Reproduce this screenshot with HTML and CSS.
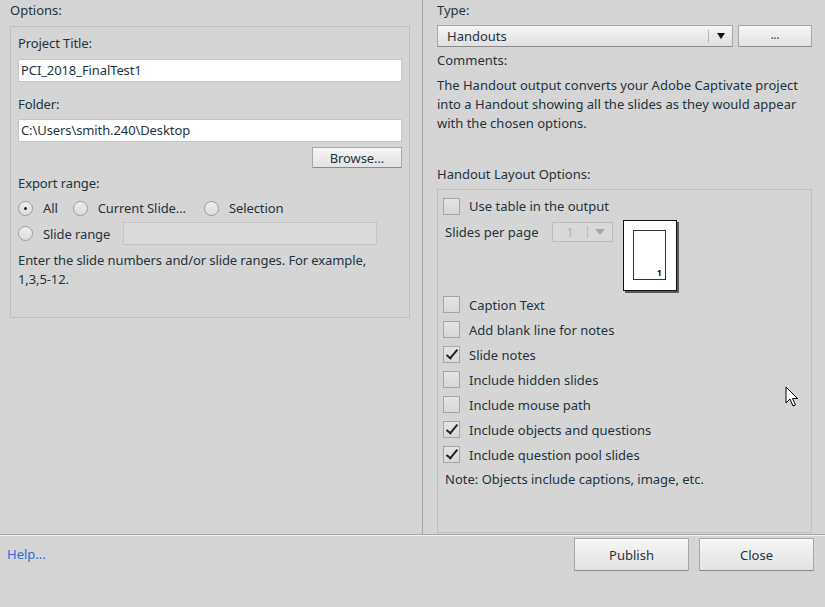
FILE: index.html
```html
<!DOCTYPE html>
<html>
	<head>
		<meta charset="utf-8" />
		<title>Publish</title>
		<link rel="stylesheet" href="styles.css">
	</head>
	<body>
		<div class="dialog">
			<div class="main">
				<!-- left: project options -->
				<div class="col-left">
					<p class="label">Options:</p>
					<div class="group options">
						<p class="label">Project Title:</p>
						<div class="field">PCI_2018_FinalTest1</div>
						<p class="label gap">Folder:</p>
						<div class="field field-2">C:\Users\smith.240\Desktop</div>
						<div class="browse-row"><span class="btn btn-small">Browse...</span></div>
						<p class="label range-label">Export range:</p>
						<div class="radio-row">
							<span class="radio on"></span><span class="rtext">All</span>
							<span class="radio"></span><span class="rtext wide">Current Slide...</span>
							<span class="radio"></span><span class="rtext">Selection</span>
						</div>
						<div class="radio-row range-row">
							<span class="radio"></span><span class="rtext">Slide range</span>
							<span class="field disabled"></span>
						</div>
						<p class="hint">Enter the slide numbers and/or slide ranges. For example,<br>1,3,5-12.</p>
					</div>
				</div>
				<!-- right: output type + handout layout -->
				<div class="col-right">
					<p class="label">Type:</p>
					<div class="type-row">
						<div class="select">
							<span class="select-text">Handouts</span>
							<span class="select-arrow"><i class="tri"></i></span>
						</div>
						<span class="btn btn-dots">...</span>
					</div>
					<p class="label comments">Comments:</p>
					<p class="comment-text">The Handout output converts your Adobe Captivate project<br>into a Handout showing all the slides as they would appear<br>with the chosen options.</p>
					<p class="label layout-label">Handout Layout Options:</p>
					<div class="group layout">
						<div class="check-row"><span class="check"></span>Use table in the output</div>
						<div class="slides-row">
							<span class="spp">Slides per page</span>
							<span class="mini-select"><span class="mini-val">1</span><span class="mini-arrow"><i class="tri grey"></i></span></span>
							<div class="page"><div class="page-inner"><span>1</span></div></div>
						</div>
						<div class="check-row"><span class="check"></span>Caption Text</div>
						<div class="check-row"><span class="check"></span>Add blank line for notes</div>
						<div class="check-row"><span class="check on"></span>Slide notes</div>
						<div class="check-row"><span class="check"></span>Include hidden slides</div>
						<div class="check-row"><span class="check"></span>Include mouse path</div>
						<div class="check-row"><span class="check on"></span>Include objects and questions</div>
						<div class="check-row"><span class="check on"></span>Include question pool slides</div>
						<p class="note">Note: Objects include captions, image, etc.</p>
					</div>
				</div>
			</div>
			<div class="footer">
				<a class="help">Help...</a>
				<div class="actions">
					<span class="btn btn-big">Publish</span>
					<span class="btn btn-big">Close</span>
				</div>
			</div>
			<svg class="cursor" width="14" height="22" viewBox="0 0 14 22">
				<path d="M1 1 L1 17 L5 13 L8 20 L10.5 19 L7.5 12.5 L12.5 12.5 Z" fill="#fff" stroke="#000" stroke-width="1" stroke-linejoin="miter"/>
			</svg>
		</div>
	</body>
</html>
```

FILE: styles.css
```css
*{
	margin: 0;
	padding: 0;
	box-sizing: border-box;
}
body{
	background: #d5d5d5;
	font-family: "Noto Sans", "Liberation Sans", sans-serif;
	font-size: 13px;
	color: #1f343d;
}
.dialog{
	position: relative;
	width: 825px;
	height: 607px;
	overflow: hidden;
}
.main{
	display: flex;
	height: 535px;
	border-bottom: 1px solid #a9a9a9;
}
.label{
	height: 20px;
	line-height: 20px;
}
/* left column */
.col-left{
	width: 424px;
	padding: 0 0 0 10px;
	border-right: 1px solid #a6a6a6;
}
.group{
	border: 1px solid #c0c0c0;
}
.options{
	width: 400px;
	height: 292px;
	margin-top: 6px;
	padding: 6px 7px 0;
	letter-spacing: -0.1px;
}
.field{
	display: block;
	height: 23px;
	line-height: 21px;
	padding-left: 2px;
	background: #fff;
	border: 1px solid #c6c6c6;
	margin-top: 6px;
}
.gap{
	margin-top: 12px;
}
.field-2{
	margin-top: 5px;
}
.browse-row{
	display: flex;
	justify-content: flex-end;
	margin-top: 5px;
}
.btn{
	display: inline-flex;
	align-items: center;
	justify-content: center;
	background: linear-gradient(#f6f6f6, #e2e2e2);
	border: 1px solid #a8a8a8;
	border-bottom-color: #8c8c8c;
	border-radius: 1px;
	cursor: default;
}
.btn-small{
	width: 90px;
	height: 21px;
}
.range-label{
	margin-top: 5px;
}
.radio-row{
	display: flex;
	align-items: center;
	height: 20px;
	margin-top: 5px;
}
.radio{
	position: relative;
	width: 15px;
	height: 15px;
	border-radius: 50%;
	border: 1px solid #9c9c9c;
	background: linear-gradient(#eeeeee, #dcdcdc);
	margin-right: 10px;
}
.radio.on::after{
	content: '';
	position: absolute;
	left: 5px;
	top: 5px;
	width: 3px;
	height: 3px;
	border-radius: 50%;
	background: #222;
}
.rtext{
	margin-right: 15px;
}
.rtext.wide{
	margin-right: 18px;
}
.range-row{
	height: 23px;
	margin-top: 4px;
}
.range-row .rtext{
	margin-right: 13px;
}
.field.disabled{
	width: 254px;
	margin-top: 0;
	background: #dadada;
	border-color: #c4c4c4;
}
.hint{
	line-height: 19px;
	margin-top: 6px;
}
/* right column */
.col-right{
	flex: 1;
	padding: 0 13px 0 14px;
}
.type-row{
	display: flex;
	margin-top: 5px;
	height: 22px;
}
.select{
	display: flex;
	width: 296px;
	background: linear-gradient(#f4f4f4, #e0e0e0);
	border: 1px solid #a8a8a8;
	border-bottom-color: #8c8c8c;
}
.select-text{
	flex: 1;
	padding-left: 9px;
	line-height: 20px;
}
.select-arrow{
	width: 24px;
	display: flex;
	align-items: center;
	justify-content: center;
	margin: 4px 0;
	border-left: 1px solid #b4b4b4;
}
.tri{
	width: 0;
	height: 0;
	border-left: 4px solid transparent;
	border-right: 4px solid transparent;
	border-top: 6px solid #111;
}
.tri.grey{
	border-left-width: 5px;
	border-right-width: 5px;
	border-top: 6px solid #a8a8a8;
}
.btn-dots{
	width: 74px;
	margin-left: 5px;
	font-weight: bold;
	font-size: 10px;
	color: #555;
	padding-bottom: 2px;
}
.comments{
	margin-top: 3px;
}
.comment-text{
	line-height: 19px;
	margin-top: 6px;
}
.layout-label{
	margin-top: 31px;
}
.layout{
	height: 344px;
	margin-top: 5px;
	padding: 7px 5px 0;
}
.check-row{
	display: flex;
	align-items: center;
	height: 25px;
}
.layout > .check-row:first-child{
	height: 18px;
}
.check{
	position: relative;
	width: 17px;
	height: 17px;
	border: 1px solid #a6a6a6;
	background: linear-gradient(#e4e4e4, #d8d8d8);
	margin-right: 9px;
}
.check.on::after{
	content: '';
	position: absolute;
	left: 5px;
	top: 0px;
	width: 4px;
	height: 10px;
	border-right: 2px solid #222;
	border-bottom: 2px solid #222;
	transform: rotate(40deg);
}
.slides-row{
	display: flex;
	align-items: flex-start;
	height: 75px;
	padding-left: 2px;
	margin-top: 2px;
}
.spp{
	line-height: 20px;
	width: 107px;
	margin-top: 5px;
}
.mini-select{
	display: flex;
	width: 61px;
	height: 20px;
	margin-top: 5px;
	border: 1px solid #bdbdbd;
	background: #d9d9d9;
}
.mini-val{
	flex: 1;
	text-align: center;
	color: #b0b0b0;
	line-height: 18px;
}
.mini-arrow{
	width: 25px;
	display: flex;
	align-items: center;
	justify-content: center;
	margin: 3px 0;
	border-left: 1px solid #bdbdbd;
}
.page{
	width: 54px;
	height: 71px;
	margin-left: 10px;
	margin-top: 3px;
	background: #fff;
	border: 1px solid #111;
	box-shadow: 2px 2px 0 #5a5a5a;
	padding: 9px 10px 0 9px;
}
.page-inner{
	display: flex;
	align-items: flex-end;
	justify-content: flex-end;
	width: 33px;
	height: 50px;
	border: 1px solid #333;
	font-size: 9px;
	font-weight: bold;
	color: #111;
	padding: 0 3px 0 0;
	line-height: 12px;
}
.note{
	line-height: 20px;
	margin-top: 2px;
	padding-left: 2px;
}
/* footer */
.footer{
	display: flex;
	justify-content: space-between;
	border-top: 1px solid #f0f0f0;
	padding: 2px 11px 0 7px;
}
.help{
	color: #2f6fd6;
	line-height: 33px;
}
.actions{
	display: flex;
	gap: 10px;
}
.btn-big{
	width: 115px;
	height: 33px;
}
.cursor{
	position: absolute;
	left: 785px;
	top: 386px;
}
```
